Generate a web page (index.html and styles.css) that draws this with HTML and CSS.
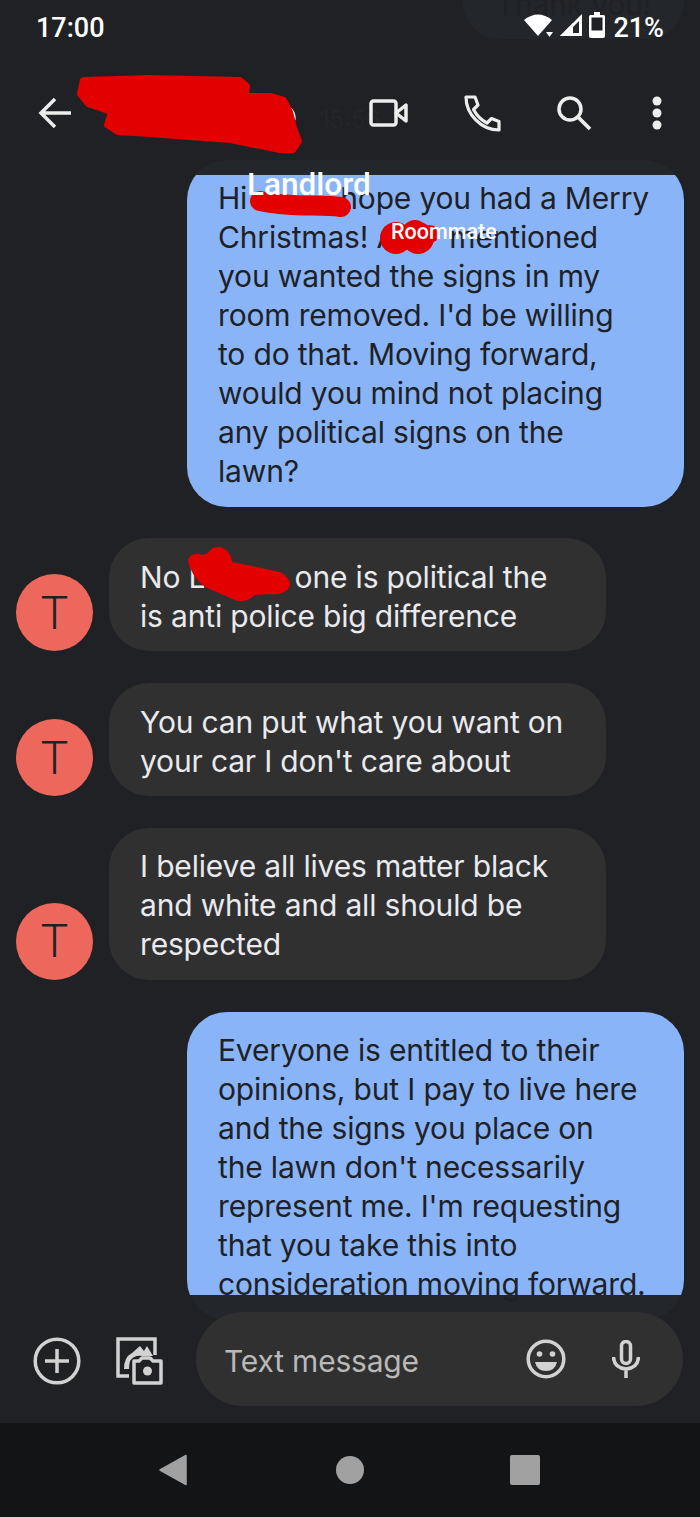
FILE: index.html
```html
<!DOCTYPE html>
<html lang="en">

<head>
    <meta charset="UTF-8">
    <meta name="viewport" content="width=device-width, initial-scale=1.0">
    <title>Messages</title>
    <link rel="stylesheet" href="styles.css">
</head>

<body>
    <div class="phone">

        <div class="thread">
            <div class="msg-out"><div class="bubble out short">Thank you!</div></div>
            <div class="stamp">15:56</div>
            <div class="msg-out">
                <div class="bubble out">Hi <span class="hidden-name name-a"></span> hope you had a Merry<br>Christmas! A<span class="hidden-name name-b"></span> mentioned<br>you wanted the signs in my<br>room removed. I'd be willing<br>to do that. Moving forward,<br>would you mind not placing<br>any political signs on the<br>lawn?</div>
            </div>
            <div class="msg-in">
                <div class="avatar">T</div>
                <div class="bubble in">No L<span class="hidden-name name-c"></span> one is political the<br>is anti police big difference</div>
            </div>
            <div class="msg-in">
                <div class="avatar">T</div>
                <div class="bubble in">You can put what you want on<br>your car I don't care about</div>
            </div>
            <div class="msg-in">
                <div class="avatar">T</div>
                <div class="bubble in">I believe all lives matter black<br>and white and all should be<br>respected</div>
            </div>
            <div class="msg-out">
                <div class="bubble out">Everyone is entitled to their<br>opinions, but I pay to live here<br>and the signs you place on<br>the lawn don't necessarily<br>represent me. I'm requesting<br>that you take this into<br>consideration moving forward.</div>
            </div>
        </div>

        <div class="top-bar">
            <div class="status-bar">
                <span class="clock">17:00</span>
                <div class="status-icons">
                    <svg width="30" height="26" viewBox="0 0 30 26"><path d="M1 8 Q15 -3 29 8 L15 24Z" fill="#fff"/><path d="M23 20h7l-3.500 5z" fill="#fff"/></svg>
                    <svg width="24" height="24" viewBox="0 0 24 24"><path d="M23 1V23H1Z M20 8 L20 20 H8Z" fill="#fff" fill-rule="evenodd"/><path d="M1 23L14 10V23Z" fill="#fff"/></svg>
                    <svg width="16" height="26" viewBox="0 0 16 26"><path d="M5 0h6v3h3.500q1.500 0 1.500 1.500V24q0 2-2 2H2q-2 0-2-2V4.500Q0 3 1.500 3H5Z" fill="#fff"/><rect x="2.500" y="5.500" width="11" height="13" fill="#202124"/></svg>
                    <span class="battery">21%</span>
                </div>
            </div>
            <div class="toolbar">
                <svg width="34" height="32" viewBox="0 0 34 32"><path d="M33 16H3M17 2L3 16l14 14" fill="none" stroke="#eceded" stroke-width="3.500"/></svg>
                <div class="toolbar-icons">
                    <svg width="40" height="30" viewBox="0 0 40 30"><rect x="2" y="3" width="25" height="24" rx="2.500" fill="none" stroke="#eceded" stroke-width="3.500"/><path d="M27 15L37 7V23Z" fill="none" stroke="#eceded" stroke-width="3.500" stroke-linejoin="round"/></svg>
                    <svg width="38" height="38" viewBox="0 0 38 38"><path d="M3 3h9l3 8-4.500 4.500C14 22 18 26 24 29l4.500-4.500 7.500 3V36C18 36 3 20 3 3Z" fill="none" stroke="#eceded" stroke-width="3.200" stroke-linejoin="round"/></svg>
                    <svg width="38" height="38" viewBox="0 0 38 38"><circle cx="15" cy="15" r="11" fill="none" stroke="#eceded" stroke-width="3.500"/><path d="M23 23L35 35" stroke="#eceded" stroke-width="3.800"/></svg>
                    <svg class="dots" width="10" height="34" viewBox="0 0 10 34"><circle cx="5" cy="5" r="4.500" fill="#eceded"/><circle cx="5" cy="17" r="4.500" fill="#eceded"/><circle cx="5" cy="29" r="4.500" fill="#eceded"/></svg>
                </div>
            </div>
        </div>

        <div class="composer">
            <svg class="tool" width="48" height="48" viewBox="0 0 48 48"><circle cx="24" cy="24" r="21.800" fill="none" stroke="#d2d2d2" stroke-width="3.500"/><path d="M24 12V36M12 24H36" stroke="#d2d2d2" stroke-width="3.500"/></svg>
            <svg class="tool" width="48" height="48" viewBox="0 0 48 48"><path d="M14 39H3V2H40V18" fill="none" stroke="#d2d2d2" stroke-width="3.500"/><path d="M9 32Q9 20 17 16L25 9 29 14 32 9 38 19H27Q19 18 15 24 14 28 14 32Z" fill="#d2d2d2"/><path d="M19 46V24H24L27 21H35L38 24H46V46Z" fill="#202124" stroke="#d2d2d2" stroke-width="3.500" stroke-linejoin="round"/><circle cx="32.500" cy="34" r="4.500" fill="#d2d2d2"/></svg>
            <div class="input-pill">
                <span class="placeholder">Text message</span>
                <svg width="40" height="40" viewBox="0 0 40 40"><circle cx="20" cy="20" r="17.800" fill="none" stroke="#d2d2d2" stroke-width="3.500"/><circle cx="13.500" cy="15" r="2.800" fill="#d2d2d2"/><circle cx="26.500" cy="15" r="2.800" fill="#d2d2d2"/><path d="M9 23H31Q29 32 20 32T9 23Z" fill="#d2d2d2"/></svg>
                <svg width="28" height="38" viewBox="0 0 28 38"><rect x="9.500" y="1.500" width="9" height="22" rx="4.500" fill="none" stroke="#d2d2d2" stroke-width="3.500"/><path d="M1.500 17Q2 28 14 29Q26 28 26.500 17M14 29V38" fill="none" stroke="#d2d2d2" stroke-width="3.500"/></svg>
            </div>
        </div>

        <div class="nav-bar">
            <svg width="28" height="32" viewBox="0 0 28 32"><path d="M27 1.500V30.500L1 16Z" fill="#a1a1a1" stroke="#a1a1a1" stroke-width="1.500" stroke-linejoin="round"/></svg>
            <div class="nav-home"></div>
            <div class="nav-recent"></div>
        </div>

        <!-- red marker and labels drawn on the screenshot -->
        <svg class="scribbles" width="700" height="1517" viewBox="0 0 700 1517">
            <path d="M289 108Q295 112 294 120" fill="none" stroke="#fff" stroke-width="3"/>
            <path d="M83 80L150 78 240 80 247 86 246 96 270 96 284 100 290 112 294 128 299 141 293 150 280 150 230 140 150 134 118 132 107 125 111 112 88 104 80 94Z" fill="#e30000" stroke="#e30000" stroke-width="6" stroke-linejoin="round"/>
            <path d="M260 201C290 208 320 204 341 207" fill="none" stroke="#e30000" stroke-width="20" stroke-linecap="round"/>
            <circle cx="396" cy="238" r="16" fill="#e30000"/>
            <circle cx="418" cy="238" r="16" fill="#e30000"/>
            <circle cx="415" cy="233" r="13" fill="#e30000"/>
            <circle cx="430" cy="234" r="9" fill="#e30000"/>
            <path d="M188 560Q190 553 198 554 205 556 208 553 212 546 220 547 231 550 232 562L280 572Q291 578 290 586 285 596 270 594L255 595Q245 604 235 600L205 587Q190 575 188 560Z" fill="#e30000"/>
        </svg>
        <div class="label label-landlord">Landlord</div>
        <div class="label label-roommate">Roommate</div>
    </div>
</body>

</html>
```

FILE: styles.css
```css
body {
    margin: 0;
    padding: 0;
    background-color: #202124;
    font-family: Inter, Roboto, sans-serif;
}

.phone {
    position: relative;
    width: 700px;
    height: 1517px;
    overflow: hidden;
    display: flex;
    flex-direction: column;
}

.thread {
    flex: 1;
    min-height: 0;
    margin-top: -34.600px;
    padding-right: 16px;
    padding-left: 16px;
    display: flex;
    flex-direction: column;
    gap: 31.700px;
}

.msg-out {
    display: flex;
    justify-content: flex-end;
}

.msg-in {
    display: flex;
    align-items: flex-end;
    gap: 16px;
}

.bubble {
    box-sizing: border-box;
    width: 497px;
    padding: 19.500px 31px 15.500px;
    border-radius: 40px;
    font-size: 30px;
    line-height: 39px;
    letter-spacing: -0.170px;
    white-space: nowrap;
    flex-shrink: 0;
}

.bubble.out {
    background-color: #8ab4f8;
    color: #202124;
}

.bubble.short {
    width: 221px;
    text-align: center;
}

.bubble.in {
    background-color: #303030;
    color: #e8eaed;
}

.hidden-name {
    display: inline-block;
}

.name-a {
    width: 76.500px;
}

.name-b {
    width: 44px;
}

.name-c {
    width: 81px;
}

.stamp {
    padding-top: 41px;
    height: 16px;
    line-height: 16px;
    text-align: center;
    font-size: 24px;
    color: #9aa0a6;
}

.avatar {
    width: 77px;
    height: 77px;
    flex-shrink: 0;
    border-radius: 50%;
    background-color: #ee675c;
    color: #202124;
    font-size: 46px;
    font-weight: 300;
    font-family: Roboto, sans-serif;
    display: flex;
    justify-content: center;
    align-items: center;
}

.top-bar {
    position: absolute;
    top: 0;
    left: 0;
    width: 700px;
    height: 175px;
    background: rgba(32, 33, 36, 0.97);
}

.status-bar {
    height: 55px;
    padding: 0 36px;
    display: flex;
    justify-content: space-between;
    align-items: center;
    color: #fff;
    font-family: Roboto, sans-serif;
    font-size: 27px;
    font-weight: 500;
}

.status-icons {
    display: flex;
    align-items: center;
    gap: 6px;
}

.status-icons svg {
    margin-bottom: 5px;
}

.battery {
    margin-left: 2px;
}

.toolbar {
    height: 116px;
    padding: 0 38px;
    display: flex;
    justify-content: space-between;
    align-items: center;
}

.toolbar-icons {
    display: flex;
    align-items: center;
    gap: 54px;
}

.dots {
    margin-left: 5px;
}

.composer {
    position: absolute;
    left: 0;
    top: 1295px;
    width: 700px;
    height: 128px;
    box-sizing: border-box;
    padding: 17px 17px 17px 33px;
    background: rgba(32, 33, 36, 0.97);
    display: flex;
    align-items: center;
    gap: 34px;
}

.tool {
    margin-top: 4px;
}

.input-pill {
    flex: 1;
    height: 94px;
    margin-left: -1px;
    padding: 0 43px 0 28px;
    border-radius: 47px;
    background-color: #303030;
    display: flex;
    align-items: center;
    gap: 46px;
}

.placeholder {
    flex: 1;
    margin-top: 3px;
    font-size: 30px;
    letter-spacing: -0.200px;
    color: #b9b9b9;
}

.nav-bar {
    height: 94px;
    flex-shrink: 0;
    position: relative;
    background-color: #131416;
    padding: 0 160px 0 159px;
    display: flex;
    justify-content: space-between;
    align-items: center;
}

.nav-home {
    width: 28px;
    height: 28px;
    margin-left: 3px;
    border-radius: 50%;
    background-color: #a1a1a1;
}

.nav-recent {
    width: 30px;
    height: 30px;
    border-radius: 2px;
    background-color: #a1a1a1;
}

.scribbles {
    position: absolute;
    top: 0;
    left: 0;
}

.label {
    position: absolute;
    color: #fff;
    font-family: Roboto, sans-serif;
    font-weight: 500;
    white-space: nowrap;
}

.label-landlord {
    top: 166px;
    left: 247px;
    font-size: 31.500px;
}

.label-roommate {
    top: 219px;
    left: 391px;
    font-size: 21.500px;
}
```
